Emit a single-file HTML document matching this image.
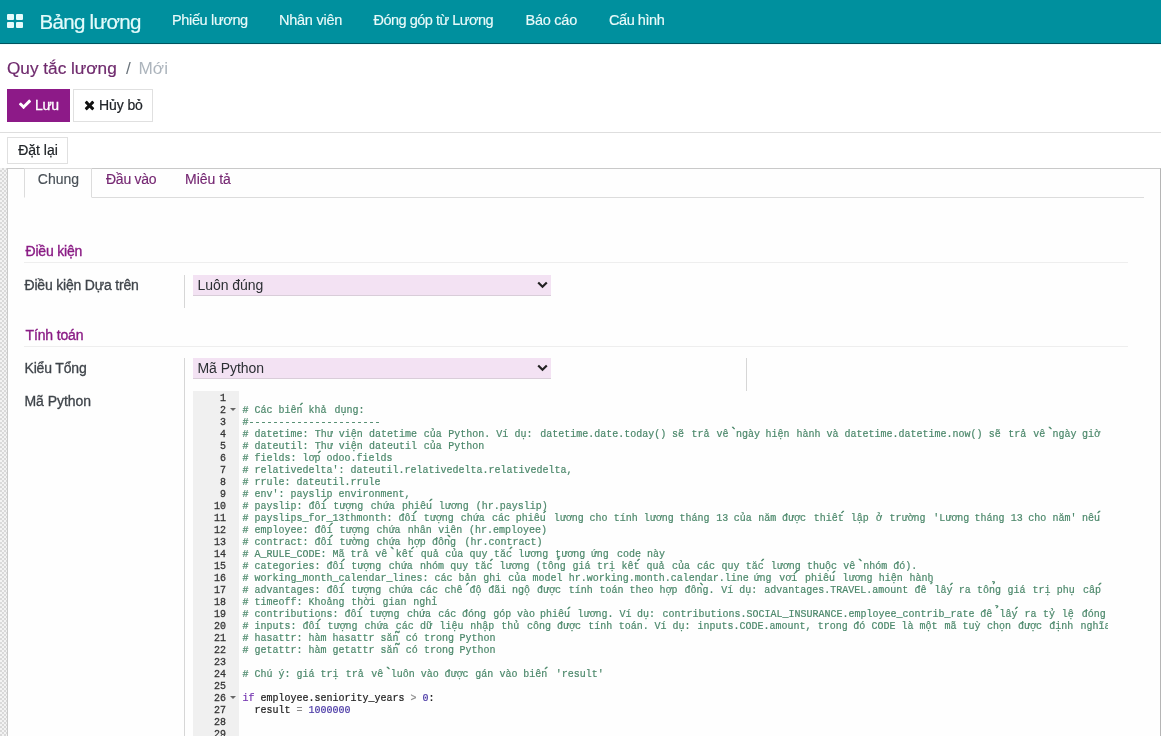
<!DOCTYPE html>
<html lang="vi">
<head>
<meta charset="utf-8">
<title>Quy tắc lương</title>
<style>
*{box-sizing:border-box;margin:0;padding:0}
html,body{width:1161px;height:736px;overflow:hidden;background:#fff}
body{font-family:"Liberation Sans",sans-serif;font-size:14px;color:#4c4c4c;position:relative}
#root{position:absolute;left:0;top:0;width:1161px;height:736px;overflow:hidden;will-change:transform}
/* navbar */
#nav{position:absolute;left:0;top:0;width:1161px;height:44px;background:#00909e;border-bottom:1px solid #00545f;box-shadow:0 1px 0 #eefcfc}
#nav .apps{position:absolute;left:7px;top:14px;width:16px;height:14px}
#nav .brand{position:absolute;left:39.5px;top:9.5px;font-size:20.5px;line-height:24px;color:#e4fbfb;white-space:nowrap;letter-spacing:-0.7px;-webkit-text-stroke:0.2px #e4fbfb}
#nav .mi{position:absolute;top:11px;font-size:14.5px;line-height:18px;color:#e9fafa;white-space:nowrap;-webkit-text-stroke:0.15px #e9fafa}
/* control panel */
#bc{position:absolute;left:7px;top:56px;font-size:17.2px;line-height:24px;white-space:nowrap}
#bc .a{color:#6f2a6d;-webkit-text-stroke:0.2px #6f2a6d}
#bc .s{color:#6c757d;padding:0 3px 0 4.5px}
#bc .n{color:#adb5bd}
.btn{position:absolute;height:33px;border:1px solid #e0e0e0;background:#fff;color:#212529;font-size:14px;line-height:31px;white-space:nowrap}
#save{left:7px;top:89px;width:63px;background:#8d1a88;border-color:#8d1a88;color:#fff}
#cancel{left:73px;top:89px;width:80px}
#hr1{position:absolute;left:0;top:132px;width:1161px;height:1px;background:#dedede}
#reset{left:7px;top:137px;width:61px;height:27px;line-height:25px;text-align:center;padding-left:1px}
/* sheet */
#hatch{position:absolute;left:0;top:168px;width:7px;height:568px;background-color:#f3f3f3;
 background-image:linear-gradient(45deg,#d9d9d9 25%,transparent 25%,transparent 75%,#d9d9d9 75%),linear-gradient(45deg,#d9d9d9 25%,transparent 25%,transparent 75%,#d9d9d9 75%);
 background-size:4px 4px;background-position:0 0,2px 2px}
#sheet{position:absolute;left:7px;top:168px;width:1154px;height:580px;border:1px solid #c9c9c9;border-right:1px solid #b5b5b5;background:#fefefe}
.tab{position:absolute;top:168px;height:30px;font-size:14px;line-height:22px;white-space:nowrap;color:#762873;-webkit-text-stroke:0.15px currentColor}
#tabline{position:absolute;left:24px;top:197px;width:1120px;height:1px;background:#dcdcdc}
#tab1{left:24px;width:68px;border:1px solid #dcdcdc;border-bottom:1px solid #fefefe;background:#fefefe;color:#495057;text-align:center;padding-top:0}
.gh{position:absolute;left:25.5px;font-size:14px;line-height:18px;color:#8a1c85;white-space:nowrap;-webkit-text-stroke:0.35px #8a1c85}
.gl{position:absolute;left:24px;width:1104px;height:1px;background:#eeeeee}
.lb{position:absolute;left:24.5px;font-size:14px;line-height:18px;color:#3f444a;white-space:nowrap;-webkit-text-stroke:0.3px #3f444a}
.vl{position:absolute;width:1px;background:#d6d6d6}
.sel{position:absolute;left:193px;width:358px;height:21px;background:#f3e2f3;border-bottom:1px solid #d9cdd9;font-size:14px;line-height:20px;color:#2b2f33;padding-left:4.5px;letter-spacing:-0.05px;white-space:nowrap}
.sel svg{position:absolute;right:3px;top:6px}
/* ace */
#gutter{position:absolute;left:193px;top:391px;width:46px;height:345px;background:#f0f0f0}
#code{position:absolute;left:193px;top:391px;width:915px;height:345px;overflow:hidden;font-family:"Liberation Mono",monospace;font-size:10px;line-height:12px}
.ln{-webkit-text-stroke:0.25px #333;position:absolute;left:0;width:33px;transform:scaleY(1.17);transform-origin:0 8.7px;text-align:right;color:#333;height:12px;white-space:pre}
.fold{position:absolute;left:37px;width:0;height:0;border-left:3px solid transparent;border-right:3px solid transparent;border-top:3px solid #666}
.cl{-webkit-text-stroke:0.2px currentColor;position:absolute;left:49px;height:12px;white-space:pre;color:#4c886b;transform:scaleY(1.17);transform-origin:0 8.7px}
.cl i{font-style:normal;position:absolute;top:0}
.cl b{-webkit-text-stroke:0.35px currentColor;font-weight:normal;display:inline-block;width:0;overflow:visible;position:relative;left:1px;top:0.7px;font-size:13px;line-height:0}
.cl b.h{left:-1.6px;top:2.3px}
.k{color:#7435b0}.t{color:#222}.o{color:#8a8a8a}.nu{color:#4b3aa6}
</style>
</head>
<body>
<div id="root">
<div id="nav">
 <svg class="apps" viewBox="0 0 16 14"><rect x="0" y="0" width="7" height="6" rx="1" fill="#e4fbfb"/><rect x="9" y="0" width="7" height="6" rx="1" fill="#e4fbfb"/><rect x="0" y="8" width="7" height="6" rx="1" fill="#e4fbfb"/><rect x="9" y="8" width="7" height="6" rx="1" fill="#e4fbfb"/></svg>
 <div class="brand">Bảng lương</div>
 <div class="mi" style="left:172px;letter-spacing:-0.35px">Phiếu lương</div>
 <div class="mi" style="left:279px;letter-spacing:-0.25px">Nhân viên</div>
 <div class="mi" style="left:373.5px;letter-spacing:-0.5px">Đóng góp từ Lương</div>
 <div class="mi" style="left:525.5px;letter-spacing:-0.25px">Báo cáo</div>
 <div class="mi" style="left:609px;letter-spacing:-0.45px">Cấu hình</div>
</div>
<div id="bc"><span class="a">Quy tắc lương</span><span class="s"> / </span><span class="n">Mới</span></div>
<div class="btn" id="save"><svg style="position:absolute;left:9.6px;top:7.3px" width="14" height="14" viewBox="0 0 1792 1792"><path fill="#fff" d="M1671 566q0 40-28 68l-724 724-136 136q-28 28-68 28t-68-28l-136-136-362-362q-28-28-28-68t28-68l136-136q28-28 68-28t68 28l294 295 656-657q28-28 68-28t68 28l136 136q28 28 28 68z"/></svg><span style="position:absolute;left:27px;letter-spacing:-0.4px;-webkit-text-stroke:0.3px #fff">Lưu</span></div>
<div class="btn" id="cancel"><svg style="position:absolute;left:9.8px;top:7.8px" width="11" height="14" viewBox="0 0 1408 1792"><path fill="#111" d="M1298 1322q0 40-28 68l-136 136q-28 28-68 28t-68-28l-294-294-294 294q-28 28-68 28t-68-28l-136-136q-28-28-28-68t28-68l294-294-294-294q-28-28-28-68t28-68l136-136q28-28 68-28t68 28l294 294 294-294q28-28 68-28t68 28l136 136q28 28 28 68t-28 68l-294 294 294 294q28 28 28 68z"/></svg><span style="position:absolute;left:25px;letter-spacing:-0.1px;-webkit-text-stroke:0.2px #212529">Hủy bỏ</span></div>
<div id="hr1"></div>
<div class="btn" id="reset" style="-webkit-text-stroke:0.2px #212529">Đặt lại</div>
<div id="hatch"></div>
<div id="sheet"></div>
<div id="tabline"></div>
<div class="tab" id="tab1"><span style="position:relative;top:-1px;left:0.5px">Chung</span></div>
<div class="tab" style="left:106px;letter-spacing:-0.25px">Đầu vào</div>
<div class="tab" style="left:185px">Miêu tả</div>

<div class="gh" style="top:242px;letter-spacing:-0.2px">Điều kiện</div>
<div class="gl" style="top:262px"></div>
<div class="lb" style="top:276px;letter-spacing:-0.19px">Điều kiện Dựa trên</div>
<div class="vl" style="left:184px;top:275px;height:33px"></div>
<div class="sel" style="top:275px">Luôn đúng<svg width="11" height="8" viewBox="0 0 11 8"><path d="M1.2 1.5 L5.5 5.8 L9.8 1.5" fill="none" stroke="#222" stroke-width="2.2"/></svg></div>

<div class="gh" style="top:326px;letter-spacing:-0.15px">Tính toán</div>
<div class="gl" style="top:346px"></div>
<div class="lb" style="top:359px;letter-spacing:-0.17px">Kiểu Tổng</div>
<div class="vl" style="left:184px;top:358px;height:378px"></div>
<div class="vl" style="left:746px;top:358px;height:33px"></div>
<div class="sel" style="top:358px">Mã Python<svg width="11" height="8" viewBox="0 0 11 8"><path d="M1.2 1.5 L5.5 5.8 L9.8 1.5" fill="none" stroke="#222" stroke-width="2.2"/></svg></div>
<div class="lb" style="top:392px;letter-spacing:-0.05px">Mã Python</div>

<div id="gutter"></div>
<div id="code">
<div class="ln" style="top:1.5px">1</div>
<div class="ln" style="top:13.5px">2</div>
<div class="fold" style="top:16.5px"></div>
<div class="cl" style="top:14.4px"><i style="left:0.5px"># Các biê<b>´</b>n khả</i><i style="left:92.5px">dụng:</i></div>
<div class="ln" style="top:25.5px">3</div>
<div class="cl" style="top:26.4px"><i style="left:0.5px">#----------------------</i></div>
<div class="ln" style="top:37.5px">4</div>
<div class="cl" style="top:38.4px"><i style="left:0.5px"># datetime:</i><i style="left:72.75px">Thư viện</i><i style="left:127px">datetime</i><i style="left:181.75px">của</i><i style="left:206.25px">Python.</i><i style="left:254.25px">Ví</i><i style="left:272.5px">dụ:</i><i style="left:298.25px">datetime.date.today()</i><i style="left:430px">sẽ</i><i style="left:449.5px">trả</i><i style="left:474.5px">vê<b>`</b></i><i style="left:494px">ngày</i><i style="left:523.5px">hiện</i><i style="left:554.5px">hành</i><i style="left:584.5px">và</i><i style="left:602.5px">datetime.datetime.now()</i><i style="left:746.75px">sẽ</i><i style="left:766.25px">trả</i><i style="left:791.25px">vê<b>`</b></i><i style="left:810.5px">ngày</i><i style="left:840px">giờ</i></div>
<div class="ln" style="top:49.5px">5</div>
<div class="cl" style="top:50.4px"><i style="left:0.5px"># dateutil:</i><i style="left:72.75px">Thư viện</i><i style="left:127px">dateutil</i><i style="left:181.75px">của</i><i style="left:206.25px">Python</i></div>
<div class="ln" style="top:61.5px">6</div>
<div class="cl" style="top:62.4px"><i style="left:0.5px"># fields: lơ<b>´</b>p odoo.fields</i></div>
<div class="ln" style="top:73.5px">7</div>
<div class="cl" style="top:74.4px"><i style="left:0.5px"># relativedelta': dateutil.relativedelta.relativedelta,</i></div>
<div class="ln" style="top:85.5px">8</div>
<div class="cl" style="top:86.4px"><i style="left:0.5px"># rrule: dateutil.rrule</i></div>
<div class="ln" style="top:97.5px">9</div>
<div class="cl" style="top:98.4px"><i style="left:0.5px"># env': payslip environment,</i></div>
<div class="ln" style="top:109.5px">10</div>
<div class="cl" style="top:110.4px"><i style="left:0.5px"># payslip: đô<b>´</b>i</i><i style="left:91.25px">tượng</i><i style="left:128.75px">chứa</i><i style="left:160px">phiê<b>´</b>u</i><i style="left:196.75px">lương</i><i style="left:233.75px">(hr.payslip)</i></div>
<div class="ln" style="top:121.5px">11</div>
<div class="cl" style="top:122.4px"><i style="left:0.5px"># payslips_for_13thmonth: đô<b>´</b>i</i><i style="left:181.75px">tượng</i><i style="left:218.75px">chứa</i><i style="left:250px">các</i><i style="left:273.75px">phiê<b>´</b>u</i><i style="left:311.75px">lương</i><i style="left:347.5px">cho</i><i style="left:371.75px">tính</i><i style="left:401.75px">lương</i><i style="left:437.5px">tháng</i><i style="left:474.25px">13</i><i style="left:491.75px">của</i><i style="left:516.25px">năm</i><i style="left:540px">được</i><i style="left:571.75px">thiê<b>´</b>t</i><i style="left:608.75px">lập</i><i style="left:633.75px">ở</i><i style="left:647.5px">trường</i><i style="left:691.25px">'Lương</i><i style="left:732.5px">tháng</i><i style="left:768.75px">13</i><i style="left:786.25px">cho</i><i style="left:810.5px">năm'</i><i style="left:840px">nê<b>´</b>u</i></div>
<div class="ln" style="top:133.5px">12</div>
<div class="cl" style="top:134.4px"><i style="left:0.5px"># employee: đô<b>´</b>i</i><i style="left:97.5px">tượng</i><i style="left:134.5px">chứa</i><i style="left:165.75px">nhân</i><i style="left:196.25px">viên</i><i style="left:227px">(hr.employee)</i></div>
<div class="ln" style="top:145.5px">13</div>
<div class="cl" style="top:146.4px"><i style="left:0.5px"># contract: đô<b>´</b>i</i><i style="left:97.5px">tường</i><i style="left:134.5px">chứa</i><i style="left:165.75px">hợp</i><i style="left:190px">đô<b>`</b>ng</i><i style="left:222.5px">(hr.contract)</i></div>
<div class="ln" style="top:157.5px">14</div>
<div class="cl" style="top:158.4px"><i style="left:0.5px"># A_RULE_CODE: Mã trả</i><i style="left:133.25px">vê<b>`</b></i><i style="left:153.75px">kê<b>´</b>t</i><i style="left:178.75px">quả</i><i style="left:203.25px">của</i><i style="left:227.5px">quy</i><i style="left:252px">tă<b>´</b>c</i><i style="left:276.25px">lương</i><i style="left:313.25px">tương</i><i style="left:348.75px">ứng</i><i style="left:375px">code</i><i style="left:405px">này</i></div>
<div class="ln" style="top:169.5px">15</div>
<div class="cl" style="top:170.4px"><i style="left:0.5px"># categories: đô<b>´</b>i</i><i style="left:109.25px">tượng</i><i style="left:146.75px">chứa</i><i style="left:178px">nhóm</i><i style="left:208.25px">quy</i><i style="left:232.5px">tă<b>´</b>c</i><i style="left:257.5px">lương</i><i style="left:293.75px">(tô<b class="h"> ̉</b>ng</i><i style="left:330.5px">giá</i><i style="left:355px">trị</i><i style="left:379.5px">kê<b>´</b>t</i><i style="left:404.5px">quả</i><i style="left:430px">của</i><i style="left:455px">các</i><i style="left:479.5px">quy</i><i style="left:503.75px">tă<b>´</b>c</i><i style="left:528.75px">lương</i><i style="left:565px">thuộc</i><i style="left:601.25px">vê<b>`</b></i><i style="left:621.25px">nhóm</i><i style="left:651.25px">đó).</i></div>
<div class="ln" style="top:181.5px">16</div>
<div class="cl" style="top:182.4px"><i style="left:0.5px"># working_month_calendar_lines: các bản</i><i style="left:241.25px">ghi</i><i style="left:266.25px">của</i><i style="left:290.5px">model</i><i style="left:326.75px">hr.working.month.calendar.line</i><i style="left:511.5px">ứng</i><i style="left:537.25px">vơ<b>´</b>i</i><i style="left:563px">phiê<b>´</b>u</i><i style="left:600.5px">lương</i><i style="left:636.75px">hiện</i><i style="left:667.5px">hành</i></div>
<div class="ln" style="top:193.5px">17</div>
<div class="cl" style="top:194.4px"><i style="left:0.5px"># advantages: đô<b>´</b>i</i><i style="left:109.25px">tượng</i><i style="left:146.75px">chứa</i><i style="left:178px">các</i><i style="left:202.5px">chê<b>´</b></i><i style="left:227.5px">độ</i><i style="left:246.25px">đãi</i><i style="left:270px">ngộ</i><i style="left:295px">được</i><i style="left:326.75px">tính</i><i style="left:357.5px">toán</i><i style="left:387.5px">theo</i><i style="left:417.5px">hợp</i><i style="left:442.5px">đô<b>`</b>ng.</i><i style="left:479.25px">Ví</i><i style="left:497.25px">dụ:</i><i style="left:522.25px">advantages.TRAVEL.amount</i><i style="left:672.5px">đê<b class="h"> ̉</b></i><i style="left:692.5px">lâ<b>´</b>y</i><i style="left:716.75px">ra</i><i style="left:735px">tô<b class="h"> ̉</b>ng</i><i style="left:765.5px">giá</i><i style="left:790.5px">trị</i><i style="left:814.75px">phụ</i><i style="left:841px">câ<b>´</b>p</i></div>
<div class="ln" style="top:205.5px">18</div>
<div class="cl" style="top:206.4px"><i style="left:0.5px"># timeoff: Khoảng</i><i style="left:109.25px">thời</i><i style="left:140.5px">gian</i><i style="left:171.25px">nghỉ</i></div>
<div class="ln" style="top:217.5px">19</div>
<div class="cl" style="top:218.4px"><i style="left:0.5px"># contributions: đô<b>´</b>i</i><i style="left:127.5px">tượng</i><i style="left:165px">chứa</i><i style="left:196.25px">các</i><i style="left:220px">đóng</i><i style="left:251.25px">góp</i><i style="left:275px">vào</i><i style="left:298px">phiê<b>´</b>u</i><i style="left:335.5px">lương.</i><i style="left:377.5px">Ví</i><i style="left:395px">dụ:</i><i style="left:420.5px">contributions.SOCIAL_INSURANCE.employee_contrib_rate</i><i style="left:738.25px">đê<b class="h"> ̉</b></i><i style="left:757.5px">lâ<b>´</b>y</i><i style="left:782.5px">ra</i><i style="left:801px">tỷ</i><i style="left:819.75px">lệ</i><i style="left:839.75px">đóng</i></div>
<div class="ln" style="top:229.5px">20</div>
<div class="cl" style="top:230.4px"><i style="left:0.5px"># inputs: đô<b>´</b>i</i><i style="left:85.5px">tượng</i><i style="left:122.5px">chứa</i><i style="left:153.75px">các</i><i style="left:178px">dữ</i><i style="left:197.5px">liệu</i><i style="left:228.25px">nhập</i><i style="left:259.25px">thủ</i><i style="left:285px">công</i><i style="left:315px">được</i><i style="left:346.25px">tính</i><i style="left:376.75px">toán.</i><i style="left:412.5px">Ví</i><i style="left:430.5px">dụ:</i><i style="left:455.5px">inputs.CODE.amount,</i><i style="left:575.75px">trong</i><i style="left:611.25px">đó</i><i style="left:629.5px">CODE</i><i style="left:659.5px">là</i><i style="left:677.5px">một</i><i style="left:702.5px">mã</i><i style="left:720.5px">tuỳ</i><i style="left:745px">chọn</i><i style="left:776px">được</i><i style="left:807.25px">định</i><i style="left:838.5px">nghĩa</i></div>
<div class="ln" style="top:241.5px">21</div>
<div class="cl" style="top:242.4px"><i style="left:0.5px"># hasattr: hàm hasattr să<b>˜</b>n</i><i style="left:163.75px">có</i><i style="left:182px">trong</i><i style="left:217.5px">Python</i></div>
<div class="ln" style="top:253.5px">22</div>
<div class="cl" style="top:254.4px"><i style="left:0.5px"># getattr: hàm getattr să<b>˜</b>n</i><i style="left:163.75px">có</i><i style="left:182px">trong</i><i style="left:217.5px">Python</i></div>
<div class="ln" style="top:265.5px">23</div>
<div class="ln" style="top:277.5px">24</div>
<div class="cl" style="top:278.4px"><i style="left:0.5px"># Chú ý: giá trị</i><i style="left:103.75px">trả</i><i style="left:129.25px">vê<b>`</b></i><i style="left:148.75px">luôn</i><i style="left:178.75px">vào</i><i style="left:202.5px">được</i><i style="left:233.25px">gán</i><i style="left:257.5px">vào</i><i style="left:281.25px">biê<b>´</b>n</i><i style="left:313.75px">'result'</i></div>
<div class="ln" style="top:289.5px">25</div>
<div class="ln" style="top:301.5px">26</div>
<div class="fold" style="top:304.5px"></div>
<div class="cl" style="top:302.4px"><i style="left:0.5px"><span class="k">if</span><span class="t"> employee.seniority_years </span><span class="o">&gt;</span><span class="t"> </span><span class="nu">0</span><span class="t">:</span></i></div>
<div class="ln" style="top:313.5px">27</div>
<div class="cl" style="top:314.4px"><i style="left:0.5px"><span class="t">  result </span><span class="o">=</span><span class="t"> </span><span class="nu">1000000</span></i></div>
<div class="ln" style="top:325.5px">28</div>
<div class="ln" style="top:337.5px">29</div>
</div>
</div>
</body>
</html>
